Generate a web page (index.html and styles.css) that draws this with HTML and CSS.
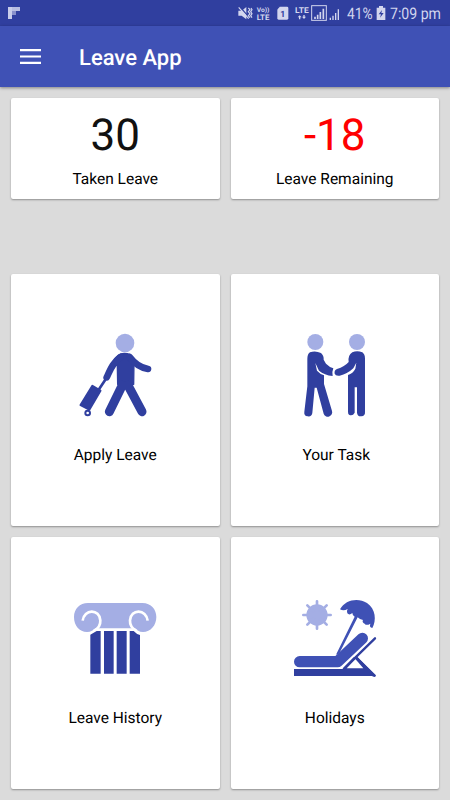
FILE: index.html
```
<!DOCTYPE html>
<html lang="en">
<head>
<meta charset="utf-8">
<title>Leave App</title>
<link rel="stylesheet" href="styles.css">
</head>
<body>
<div class="status">
  <svg class="notif" viewBox="0 0 12 12"><path fill="#c9cdea" d="M0 0h4v12H0z"/><path fill="#b9bee2" d="M4 0h8v4H4z"/><path fill="#8991cb" d="M4 4h4v4H4z"/></svg>
  <svg class="indicators" viewBox="0 0 330 78">
    <g fill="#d3d6ee">
      <path d="M25 32h10l14-11v37L35 47H25z"/>
      <rect x="142" y="20" width="33" height="39" rx="4"/>
    </g>
    <path d="M30 21l28 32" stroke="#303f9f" stroke-width="4"/>
    <path d="M26 22l30 34M55 24l5 5-5 6 5 6-5 6 5 6M63 24l3 5-4 6 4 6-4 6 4 6" fill="none" stroke="#d3d6ee" stroke-width="3.5"/>
    <path d="M141 29v-10h10z" fill="#303f9f"/>
    <g fill="#d3d6ee" class="tiny">
      <text x="80" y="37" font-size="19" textLength="38" lengthAdjust="spacingAndGlyphs">Vo))</text>
      <text x="80" y="59" font-size="23" textLength="38" lengthAdjust="spacingAndGlyphs">LTE</text>
      <text x="195" y="39" font-size="24" textLength="41" lengthAdjust="spacingAndGlyphs">LTE</text>
    </g>
    <text x="151" y="50" font-size="26" class="tiny" fill="#303f9f">1</text>
    <path d="M203 52l6-6 6 6h-4v6h-4v-6zM216 50h4v-5h4v5h4l-6 7z" fill="#d3d6ee"/>
    <rect x="245" y="17" width="44" height="44" fill="none" stroke="#d3d6ee" stroke-width="3"/>
    <path d="M255 57v-7M263 57V44M271 57V36M280 57V26" stroke="#d3d6ee" stroke-width="5"/>
    <path d="M301 60v-7M309 60V47M317 60V39M325 60V28" stroke="#d3d6ee" stroke-width="4"/>
  </svg>
  <span class="percent">41%</span>
  <svg class="battery" viewBox="0 0 30 42"><path fill="#d3d6ee" d="M9 0h12v5h7v37H2V5h7z"/><path fill="#303f9f" d="M18 12L8 25h7l-3 10 11-14h-7z"/></svg>
  <span class="time">7:09 pm</span>
</div>
<header class="appbar">
  <svg class="menu" viewBox="0 0 21 15"><path d="M0 1.2h21M0 7.5h21M0 13.8h21" stroke="#fff" stroke-width="2.2"/></svg>
  <h1>Leave App</h1>
</header>
<main>
  <section class="grid stats">
    <div class="card"><div class="number">30</div><div class="caption">Taken Leave</div></div>
    <div class="card"><div class="number negative">-18</div><div class="caption">Leave Remaining</div></div>
  </section>
  <section class="grid tiles">
    <div class="card tile">
      <svg viewBox="0 0 300 300">
        <circle cx="180" cy="54" r="28" fill="#a4aee4"/>
        <g fill="#303f9f" stroke="#303f9f" stroke-linecap="round" stroke-linejoin="round">
          <path stroke-width="4" d="M166 87q15-4 30 2l11 20-1 69q-24 8-48 0l-1-55-14-10q10-20 23-26z"/>
          <path fill="none" stroke-width="20" d="M166 97C143 113 136 134 125 157"/>
          <path fill="none" stroke-width="20" d="M194 96C211 119 226 128 249 132"/>
          <path fill="none" stroke-width="27" d="M172 181L133 260M189 181L231 260"/>
          <path fill="none" stroke-width="8" d="M122 163L99 197"/>
          <path stroke-width="7" d="M82 183L106 197 73 253 47 240z"/>
          <circle cx="68" cy="264" r="7" fill="#fff" stroke-width="6"/>
        </g>
      </svg>
      <div class="caption">Apply Leave</div>
    </div>
    <div class="card tile">
      <svg viewBox="-15 0 300 300">
        <g fill="#a4aee4"><circle cx="76" cy="51" r="24"/><circle cx="201" cy="51" r="24"/></g>
        <g fill="#303f9f">
          <path d="M60 82Q76 76 93 84Q102 92 101 104L108 116Q118 126 130 130Q125 142 128 153Q103 150 87 137L76 114 81 137Q90 147 102 151V177L126 258A13 13 0 0 1 101 266L80 188H74L67 264A12 12 0 0 1 43 260L52 184V102Q52 87 60 82z"/>
          <path d="M187 82Q201 76 217 82Q225 88 225 101V261A12 12 0 0 1 201 263V187H194V263Q188 274 177 269Q174 267 174 260V150Q189 145 196 131L199 113 190 130Q172 147 149 152Q137 154 134 146Q132 136 141 132Q164 125 176 111Q173 91 187 82z"/>
        </g>
      </svg>
      <div class="caption task">Your Task</div>
    </div>
    <div class="card tile">
      <svg viewBox="15 -6 300 300">
        <path d="M84 39H247C274 39 289 59 289 81C289 106 272 126 249 126C237 126 231 121 225 115H106C100 121 93 126 81 126C58 126 42 107 42 81C42 57 59 39 84 39z" fill="#a4aee4"/>
        <path d="M68 92C72 56 119 56 121 91C122 106 114 116 101 123M263 92C259 56 212 56 210 91C209 106 217 116 230 123" fill="none" stroke="#fff" stroke-width="8"/>
        <path fill="#303f9f" d="M91 134L110 123H122V251H91zM132 123H161V251H132zM170 123H200V251H170zM209 123H221Q229 132 240 135V251H209z"/>
      </svg>
      <div class="caption">Leave History</div>
    </div>
    <div class="card tile">
      <svg viewBox="0 -6 300 300">
        <g stroke="#a4aee4" stroke-width="8" stroke-linecap="round">
          <circle cx="96" cy="75" r="28" fill="#a4aee4"/>
          <path d="M96 34V116M55 75H137M67 46L125 104M67 104L125 46"/>
        </g>
        <path d="M165 58C181 29 219 22 246 39C272 56 275 91 262 114Q252 112 256 101Q244 108 239 101Q230 97 234 90Q224 88 218 82L163 190 153 194 209 80Q202 76 202 69Q193 77 187 70Q184 63 188 57Q176 64 165 58z" fill="#3f51b5"/>
        <path d="M44 215H158L232 145" fill="none" stroke="#3f51b5" stroke-width="34" stroke-linecap="round" stroke-linejoin="round"/>
        <path d="M27 237H172L206 202 218 202 272 257 267 260 260 258H27z" fill="#303f9f"/>
        <path d="M211 207L235 235H185z" fill="#fff"/>
        <path d="M270 145L178 235M213 202L269 257" stroke="#303f9f" stroke-width="7" stroke-linecap="round"/>
      </svg>
      <div class="caption">Holidays</div>
    </div>
  </section>
</main>
</body>
</html>
```
FILE: styles.css
```
* { box-sizing: border-box; }
body {
  margin: 0;
  height: 800px;
  overflow: hidden;
  background: #dbdbdb;
  color: #111;
  font-family: Roboto, sans-serif;
  text-rendering: geometricPrecision;
}
svg { display: block; flex: none; }
.status {
  display: flex;
  align-items: center;
  height: 26px;
  padding-left: 8px;
  background: #303f9f;
  color: #d3d6ee;
  font-size: 16px;
  white-space: nowrap;
}
.notif { width: 12px; height: 12px; }
.indicators { width: 110px; height: 26px; margin-left: 210px; }
.tiny { font-family: Roboto, sans-serif; font-weight: 700; }
.percent, .time { line-height: 26px; padding-top: 2px; transform-origin: left; }
.percent { width: 25px; margin-left: 7px; transform: scaleX(.86); }
.battery { width: 10px; height: 14px; margin-left: 4px; }
.time { margin-left: 4px; transform: scaleX(.88); }
.appbar {
  position: relative;
  display: flex;
  align-items: center;
  height: 61px;
  padding-left: 20px;
  background: #3f51b5;
  box-shadow: 0 1px 3px rgba(0, 0, 0, .4);
  color: #fff;
}
.menu { width: 21px; height: 15px; }
h1 { margin: 4px 0 0 38px; font-size: 22px; line-height: 28px; font-weight: 500; }
main { padding: 11px 11px 0; }
.grid { display: grid; grid-template-columns: 1fr 1fr; gap: 11px; }
.stats { grid-auto-rows: 101px; }
.tiles { margin-top: 75px; grid-auto-rows: 252px; }
.card {
  background: #fff;
  border-radius: 2px;
  box-shadow: 0 1px 2px rgba(0, 0, 0, .35);
  text-align: center;
}
.number { padding-top: 10px; font-size: 44px; line-height: 54px; }
.negative { color: #f00; }
.caption { margin-top: 7px; font-size: 15.5px; line-height: 20px; color: #000; }
.tile { padding-top: 51px; }
.tile svg { width: 100px; height: 100px; margin: 0 auto; }
.tile .caption { margin-top: 20px; }
.tile .task { padding-left: 3px; }
```
